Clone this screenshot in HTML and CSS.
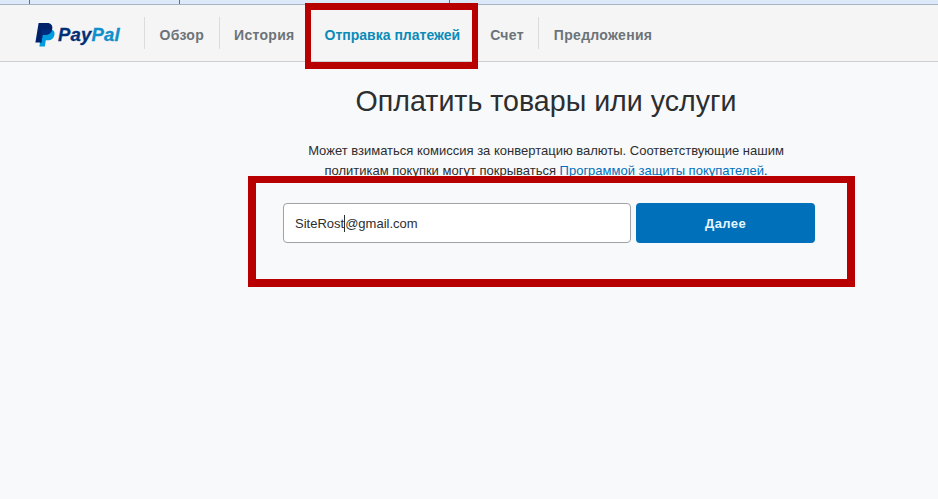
FILE: index.html
```html
<!DOCTYPE html>
<html lang="en">
<head>
  <meta charset="UTF-8">
  <meta name="viewport" content="width=device-width, initial-scale=1">
  <title>PayPal</title>
  <link rel="stylesheet" href="styles.css">
</head>
<body>

  <div class="strip">
    <span class="tick tick-a"></span>
    <span class="tick tick-b"></span>
    <span class="tick tick-c"></span>
  </div>

  <nav class="nav">
    <a class="logo" href="#">
      <svg class="logo-mark" viewBox="0 0 20 24" width="20" height="24">
        <path fill="#009cde" d="M6.6 6.5h8.2c3.2 0 5.2 1.9 4.7 5-.6 3.7-3 5.8-6.5 5.8h-2.2l-1 6.2H4.4z"/>
        <path fill="#012169" d="M3.6 0h8.2c3.6 0 6.1 2 5.5 5.6-.7 4.2-3.4 6.4-7.4 6.4H7.6l-1.2 7.6H.4z"/>
        <path fill="#003087" d="M6.6 6.5h8.2c1 0 1.8.2 2.5.6-.8 3.2-3.4 4.9-7.4 4.9H7.6l-1 6.5-.2 1.1H4.9z" opacity=".75"/>
      </svg>
      <span class="logo-text"><span class="pay">Pay</span><span class="pal">Pal</span></span>
    </a>
    <a class="nav-item" href="#">Обзор</a>
    <a class="nav-item" href="#">История</a>
    <a class="nav-item active" href="#">Отправка платежей</a>
    <a class="nav-item no-line" href="#">Счет</a>
    <a class="nav-item" href="#">Предложения</a>
  </nav>

  <main class="main">
    <h1 class="title">Оплатить товары или услуги</h1>
    <p class="note">
      Может взиматься комиссия за конвертацию валюты. Соответствующие нашим<br>
      политикам покупки могут покрываться <a href="#">Программой защиты покупателей</a>.
    </p>
    <form class="send">
      <div class="field">SiteRost<span class="caret"></span>@gmail.com</div>
      <button class="next" type="button">Далее</button>
    </form>
  </main>

  <!-- red marks drawn over the screenshot -->
  <div class="mark mark-nav"></div>
  <div class="mark mark-form"></div>

</body>
</html>
```

FILE: styles.css
```css
* {
  box-sizing: border-box;
}

body {
  margin: 0;
  height: 100vh;
  background-color: #f8f9fb;
  font-family: "Liberation Sans", Arial, sans-serif;
  color: #2c2e2f;
  overflow: hidden;
  position: relative;
}

a {
  text-decoration: none;
}

.strip {
  display: flex;
  height: 5px;
  background-color: #dbe9f8;
  border-bottom: 1px solid #a9b4c0;
}

.tick {
  height: 4px;
  border-right: 1px solid #6e6e6e;
}

.tick-a { width: 30px; }
.tick-b { width: 150px; }
.tick-c { width: 270px; }

.nav {
  display: flex;
  align-items: center;
  height: 57px;
  padding-left: 35px;
  background-color: #f5f5f5;
  border-bottom: 1px solid #cfcfcf;
}

.logo {
  display: flex;
  align-items: center;
  gap: 3px;
  width: 109px;
  margin-top: 4px;
}

.logo-text {
  font-size: 18.5px;
  font-weight: bold;
  font-style: italic;
  letter-spacing: 0.2px;
  -webkit-text-stroke: 0.3px;
}

.pay { color: #012f75; }
.pal { color: #0f8fcb; }

.nav-item {
  display: flex;
  align-items: center;
  height: 32px;
  padding: 4px 14.5px 0;
  border-left: 1px solid #dcdcdc;
  font-size: 14px;
  font-weight: bold;
  letter-spacing: 0.3px;
  color: #6c7378;
}

.nav-item.active {
  color: #0b8bb8;
  letter-spacing: 0;
}

.nav-item.no-line {
  border-left-color: transparent;
}

.main {
  width: 596px;
  margin-left: 248px;
}

.title {
  margin: 22px 0 0;
  font-size: 28.6px;
  font-weight: normal;
  line-height: 34px;
  text-align: center;
  color: #2c2e2f;
}

.note {
  margin: 23px 0 0;
  font-size: 13px;
  line-height: 20px;
  text-align: center;
}

.note a {
  color: #0070ba;
}

.send {
  display: flex;
  gap: 5px;
  margin: 22px 0 0 35px;
}

.field {
  display: flex;
  align-items: center;
  width: 348px;
  height: 40px;
  padding-left: 11px;
  background-color: #fff;
  border: 1px solid #9da3a6;
  border-radius: 4px;
  font-size: 13px;
}

.caret {
  width: 1px;
  height: 17px;
  background-color: #2c2e2f;
}

.next {
  width: 179px;
  height: 40px;
  border: 0;
  border-radius: 4px;
  background-color: #0070ba;
  color: #e6f6ff;
  font-family: inherit;
  font-size: 13px;
  font-weight: bold;
  letter-spacing: 0.4px;
}

.mark {
  position: absolute;
  border-style: solid;
  border-color: #b80000;
}

.mark-nav {
  left: 305px;
  top: 3px;
  width: 173px;
  height: 66px;
  border-width: 7px 6px;
}

.mark-form {
  left: 248px;
  top: 176px;
  width: 607px;
  height: 111px;
  border-width: 7px 8px 8px;
}
```
